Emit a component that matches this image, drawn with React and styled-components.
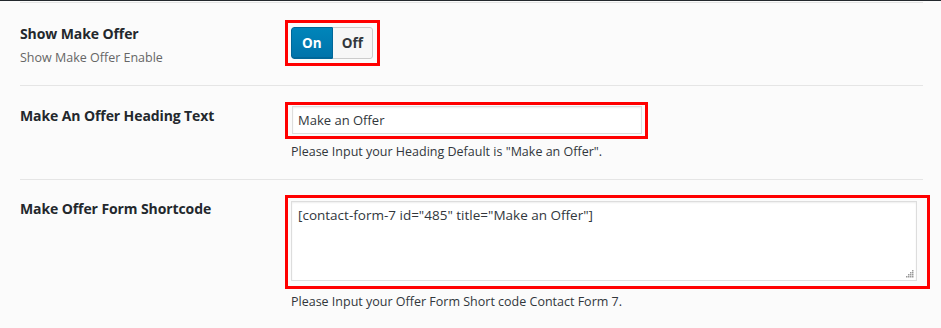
import React from 'react'
import styled, { createGlobalStyle } from 'styled-components'

const GlobalStyle = createGlobalStyle`
  html, body {
    margin: 0;
    padding: 0;
    background: #fbfbfb;
  }
  body {
    font-family: "Open Sans", "Noto Sans", sans-serif;
    color: #23282d;
  }
`

const Page = styled.div`
  width: 941px;
  height: 328px;
  overflow: hidden;
  border-top: 1px solid #23282d;
  box-sizing: border-box;
`

const Table = styled.div`
  margin-left: 20px;
  width: 903px;
  border-top: 1px solid #e5e5e5;
  margin-top: 1px;
`

const Row = styled.div`
  display: grid;
  grid-template-columns: 265px 1fr;
  padding: ${p => p.pad || '17px 0 19px'};
  border-bottom: ${p => (p.last ? 'none' : '1px solid #e5e5e5')};
`

const LabelCol = styled.div`
  padding-top: 5px;
`

const Title = styled.div`
  font-size: 14px;
  font-weight: 700;
  letter-spacing: -0.1px;
  color: #23282d;
  line-height: 18px;
`

const Sub = styled.div`
  margin-top: 7px;
  font-size: 12.5px;
  color: #666;
  line-height: 16px;
`

const Mark = styled.div`
  display: inline-block;
  border: 3px solid #f00;
  padding: ${p => p.pad};
  box-sizing: border-box;
  width: ${p => p.w}px;
`

const Toggle = styled.div`
  display: flex;
  width: 82px;
  height: 32px;
  border-radius: 3px;
  overflow: hidden;
  box-sizing: border-box;
`

const ToggleBtn = styled.div`
  flex: 1;
  display: flex;
  align-items: center;
  justify-content: center;
  font-size: 13.5px;
  font-weight: 700;
  color: ${p => (p.active ? '#fff' : '#32373c')};
  background: ${p =>
    p.active ? 'linear-gradient(#0085ba, #0073aa)' : '#f7f7f7'};
  border: 1px solid ${p => (p.active ? '#006799' : '#ccc')};
  border-radius: ${p => (p.active ? '3px 0 0 3px' : '0 3px 3px 0')};
  border-left-width: ${p => (p.active ? '1px' : '0')};
  box-shadow: ${p => (p.active ? 'inset 0 -1px 0 #006799' : 'none')};
`

const TextInput = styled.input`
  display: block;
  width: 100%;
  height: 28px;
  box-sizing: border-box;
  border: 1px solid #ddd;
  box-shadow: inset 0 1px 2px rgba(0, 0, 0, 0.07);
  background: #fff;
  font-family: inherit;
  font-size: 13px;
  color: #32373c;
  padding: 0 5px;
  outline: none;
`

const AreaWrap = styled.div`
  position: relative;
  width: 626px;
`

const TextArea = styled.textarea`
  display: block;
  width: 626px;
  height: 80px;
  box-sizing: border-box;
  border: 1px solid #ddd;
  box-shadow: inset 0 1px 2px rgba(0, 0, 0, 0.07);
  background: #fff;
  font-family: inherit;
  font-size: 13.5px;
  color: #32373c;
  padding: 4px 6px;
  outline: none;
  resize: none;
  line-height: 18px;
`

const Grip = styled.svg`
  position: absolute;
  right: 3px;
  bottom: 3px;
  width: 8px;
  height: 8px;
`

const Help = styled.p`
  margin: 4px 0 0 6px;
  font-size: 12.5px;
  color: #32373c;
  line-height: 18px;
`

const ResizeGrip = () => (
  <Grip viewBox="0 0 8 8">
    {[
      [6, 0],
      [4, 2],
      [6, 2],
      [2, 4],
      [4, 4],
      [6, 4],
      [0, 6],
      [2, 6],
      [4, 6],
      [6, 6]
    ].map(([x, y]) => (
      <rect key={`${x}-${y}`} x={x} y={y} width="1.5" height="1.5" fill="#999" />
    ))}
  </Grip>
)

export default function App() {
  return (
    <>
      <GlobalStyle />
      <Page>
        <Table>
          <Row>
            <LabelCol>
              <Title>Show Make Offer</Title>
              <Sub>Show Make Offer Enable</Sub>
            </LabelCol>
            <div>
              <Mark w={95} pad="4px 4px 4px 3px">
                <Toggle>
                  <ToggleBtn active>On</ToggleBtn>
                  <ToggleBtn>Off</ToggleBtn>
                </Toggle>
              </Mark>
            </div>
          </Row>
          <Row pad="16px 0 18px">
            <LabelCol>
              <Title>Make An Offer Heading Text</Title>
            </LabelCol>
            <div>
              <Mark w={363} pad="1px 3px 2px 4px">
                <TextInput defaultValue="Make an Offer" />
              </Mark>
              <Help>Please Input your Heading Default is "Make an Offer".</Help>
            </div>
          </Row>
          <Row pad="15px 0 0" last>
            <LabelCol>
              <Title>Make Offer Form Shortcode</Title>
            </LabelCol>
            <div>
              <Mark w={645} pad="3px 10px 5px 3px">
                <AreaWrap>
                  <TextArea defaultValue={'[contact-form-7 id="485" title="Make an Offer"]'} />
                  <ResizeGrip />
                </AreaWrap>
              </Mark>
              <Help>Please Input your Offer Form Short code Contact Form 7.</Help>
            </div>
          </Row>
        </Table>
      </Page>
    </>
  )
}
